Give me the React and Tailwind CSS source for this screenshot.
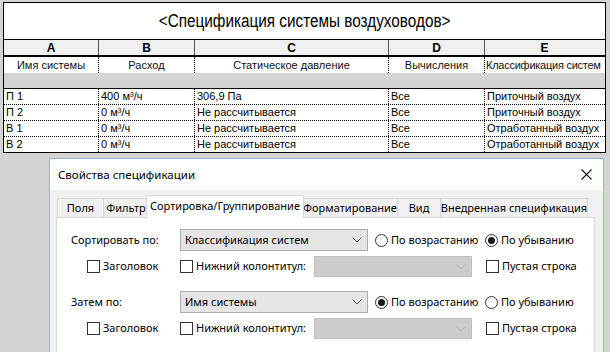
import React from "react";

const TF = { fontFamily: '"Liberation Sans",sans-serif' };
const UI = { fontFamily: '"Noto Sans","Open Sans",sans-serif' };

const W = ["w-[95px]", "w-[96px]", "w-[194px]", "w-[96px]", "w-[119px]"];

const rows = [
  ["П 1", "400 м³/ч", "306,9 Па", "Все", "Приточный воздух"],
  ["П 2", "0 м³/ч", "Не рассчитывается", "Все", "Приточный воздух"],
  ["В 1", "0 м³/ч", "Не рассчитывается", "Все", "Отработанный воздух"],
  ["В 2", "0 м³/ч", "Не рассчитывается", "Все", "Отработанный воздух"],
];

function Chevron({ disabled }) {
  return (
    <svg width="10" height="6" viewBox="0 0 10 6" className="shrink-0">
      <path d="M0.5 0.5 L5 5 L9.5 0.5" fill="none" stroke={disabled ? "#b5b5b5" : "#555"} strokeWidth="1" />
    </svg>
  );
}

function Check({ label, w }) {
  return (
    <div className={`flex items-center ${w}`}>
      <div className="w-[13px] h-[13px] border border-[#333] bg-white shrink-0" />
      <span className="ml-[3px] whitespace-nowrap">{label}</span>
    </div>
  );
}

function Radio({ label, on, w }) {
  return (
    <div className={`flex items-center ${w}`}>
      <div className="w-[13px] h-[13px] rounded-full border border-[#333] bg-white shrink-0 flex items-center justify-center">
        {on && <div className="w-[7px] h-[7px] rounded-full bg-[#1a1a1a]" />}
      </div>
      <span className="ml-[3px] whitespace-nowrap">{label}</span>
    </div>
  );
}

function Select({ text }) {
  return (
    <div className="w-[188px] h-[22px] bg-[#e5e5e5] border border-[#adadad] flex items-center justify-between pl-[4px] pr-[5px]">
      <span className="whitespace-nowrap">{text}</span>
      <Chevron />
    </div>
  );
}

function Disabled() {
  return (
    <div className="w-[158px] h-[21px] bg-[#cccccc] border border-[#bfbfbf] flex items-center justify-end pr-[5px]">
      <Chevron disabled />
    </div>
  );
}

function SortBlock({ label, value, asc }) {
  return (
    <>
      <div className="flex items-center h-[22px]">
        <span className="w-[109px] whitespace-nowrap">{label}</span>
        <Select text={value} />
        <div className="w-[7px]" />
        <Radio label="По возрастанию" on={asc} w="w-[110px]" />
        <Radio label="По убыванию" on={!asc} w="w-[100px]" />
      </div>
      <div className="flex items-center h-[21px] mt-[5px]">
        <div className="w-[16px]" />
        <Check label="Заголовок" w="w-[93px]" />
        <Check label="Нижний колонтитул:" w="w-[134px]" />
        <Disabled />
        <div className="w-[14px]" />
        <Check label="Пустая строка" w="w-[100px]" />
      </div>
    </>
  );
}

export default function App() {
  const tabs = [
    ["Поля", "w-[46px]"],
    ["Фильтр", "w-[45px]"],
    ["Сортировка/Группирование", "w-[158px]", true],
    ["Форматирование", "w-[95px]"],
    ["Вид", "w-[43px]"],
    ["Внедренная спецификация", "w-[148px]", false, true],
  ];
  return (
    <div className="w-[610px] h-[352px] bg-[#d4d4d4] overflow-hidden">
      {/* schedule table */}
      <div className="ml-[3px] pt-[2px] w-[603px]" style={TF}>
        <div className="h-[38px] bg-white border border-black flex items-center justify-center text-[18px] text-black">
          <span className="inline-block scale-x-[0.85] whitespace-nowrap">&lt;Спецификация системы воздуховодов&gt;</span>
        </div>
        <div className="flex h-[17px] bg-[#f0f0f0] border-l border-r border-black border-b-2 border-b-black">
          {["A", "B", "C", "D", "E"].map((l, i) => (
            <div key={l} className={`${W[i]} ${i < 4 ? "border-r border-[#555]" : ""} flex items-center justify-center text-[12px] font-bold text-black`}>
              {l}
            </div>
          ))}
        </div>
        <div className="flex h-[16px] bg-white border-l border-r border-black text-[11px] text-[#111]">
          {["Имя системы", "Расход", "Статическое давление", "Вычисления", "Классификация систем"].map((t, i) => (
            <div key={t} className={`${W[i]} ${i < 4 ? "border-r border-dotted border-black" : "pl-[1px] tracking-[-0.25px]"} flex items-center ${i === 4 ? "" : "justify-center"} whitespace-nowrap overflow-hidden`}>
              {t}
            </div>
          ))}
        </div>
        <div className="h-[15px] bg-[#d4d4d4] border-l border-r border-black" />
        <div className="bg-white border border-black text-[11px] text-black">
          {rows.map((r, ri) => (
            <div key={ri} className={`flex ${ri < 3 ? "h-[16px] border-b border-dotted border-black" : "h-[15px]"}`}>
              {r.map((c, i) => (
                <div key={i} className={`${W[i]} ${i < 4 ? "border-r border-dotted border-black" : ""} flex items-center pl-[2px] whitespace-nowrap overflow-hidden`}>
                  {c}
                </div>
              ))}
            </div>
          ))}
        </div>
      </div>

      {/* dialog */}
      <div className="ml-[49px] mt-[5px] w-[555px] h-[200px] border border-[#9db2cc] bg-[#f0f0f0] text-[11px] text-black" style={UI}>
        <div className="h-[31px] bg-white flex items-center justify-between pl-[8px] pr-[11px]">
          <span className="text-[11.5px]">Свойства спецификации</span>
          <svg width="11" height="11" viewBox="0 0 11 11">
            <path d="M0.5 0.5 L10.5 10.5 M10.5 0.5 L0.5 10.5" stroke="#111" strokeWidth="1.1" />
          </svg>
        </div>
        <div className="px-[6px] pt-[4px]">
          <div className="flex items-end h-[23px] pl-[1px]">
            {tabs.map(([t, w, active, last]) => (
              <div
                key={t}
                className={`${w} flex items-center justify-center whitespace-nowrap border-t border-l border-[#d9d9d9] ${last ? "border-r" : ""} ${
                  active ? "h-[23px] bg-white -mb-px relative z-10 -mx-[2px] border-r pb-[2px]" : "h-[19px] bg-[#f0f0f0]"
                }`}
              >
                {t}
              </div>
            ))}
          </div>
          <div className="w-[539px] h-[140px] bg-white border border-[#d9d9d9] pl-[14px] pt-[11px]">
            <SortBlock label="Сортировать по:" value="Классификация систем" asc={false} />
            <div className="h-[14px]" />
            <SortBlock label="Затем по:" value="Имя системы" asc={true} />
          </div>
        </div>
      </div>
    </div>
  );
}
